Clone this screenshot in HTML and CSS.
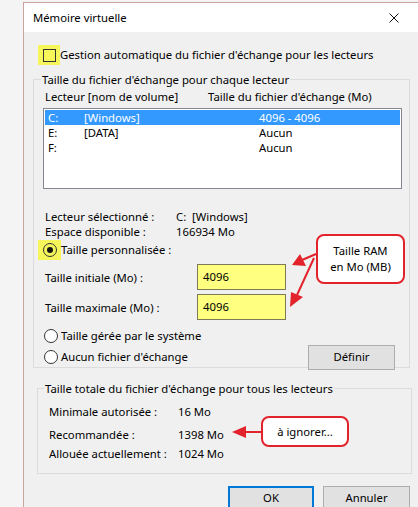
FILE: index.html
```html
<!DOCTYPE html>
<html lang="fr">
<head>
<meta charset="utf-8">
<title>Mémoire virtuelle</title>
<link rel="stylesheet" href="styles.css">
</head>
<body>
<div class="window">
  <div class="titlebar">
    <span class="title">Mémoire virtuelle</span>
    <svg class="close" width="10" height="10" viewBox="0 0 10 10"><path d="M0.5 0.5 L9.5 9.5 M9.5 0.5 L0.5 9.5" stroke="#111" stroke-width="1" fill="none"/></svg>
  </div>
  <div class="content">
    <div class="auto-row">
      <span class="hl hl-check"><span class="checkbox"></span></span>
      <span>Gestion automatique du fichier d'échange pour les lecteurs</span>
    </div>

    <fieldset class="group group1">
      <legend>Taille du fichier d'échange pour chaque lecteur</legend>
      <div class="cols">
        <span class="col-a">Lecteur [nom de volume]</span>
        <span>Taille du fichier d'échange (Mo)</span>
      </div>
      <div class="listbox">
        <div class="lrow sel"><span class="c1">C:</span><span class="c2">[Windows]</span><span>4096 - 4096</span></div>
        <div class="lrow"><span class="c1">E:</span><span class="c2">[DATA]</span><span>Aucun</span></div>
        <div class="lrow"><span class="c1">F:</span><span class="c2"></span><span>Aucun</span></div>
      </div>
      <div class="info info-first"><span class="lab">Lecteur sélectionné :</span><span>C:&nbsp; [Windows]</span></div>
      <div class="info"><span class="lab">Espace disponible :</span><span>166934 Mo</span></div>
      <div class="radio-row custom">
        <span class="hl hl-radio"><span class="radio on"></span></span>
        <span>Taille personnalisée :</span>
      </div>
      <div class="field-row first-field"><span class="flab">Taille initiale (Mo) :</span><span class="input">4096</span></div>
      <div class="field-row"><span class="flab">Taille maximale (Mo) :</span><span class="input">4096</span></div>
      <div class="radio-row sys"><span class="radio"></span><span>Taille gérée par le système</span></div>
      <div class="radio-row none">
        <span class="radio"></span><span class="grow">Aucun fichier d'échange</span>
        <span class="btn btn-def">Définir</span>
      </div>
    </fieldset>

    <fieldset class="group group2">
      <legend>Taille totale du fichier d'échange pour tous les lecteurs</legend>
      <div class="tot r1"><span class="tlab">Minimale autorisée :</span><span>16 Mo</span></div>
      <div class="tot r2"><span class="tlab">Recommandée :</span><span>1398 Mo</span></div>
      <div class="tot r3"><span class="tlab">Allouée actuellement :</span><span>1024 Mo</span></div>
    </fieldset>

    <div class="buttons">
      <span class="btn btn-ok">OK</span>
      <span class="btn btn-cancel">Annuler</span>
    </div>
  </div>
</div>

<div class="callout callout-ram">Taille RAM<br>en Mo (MB)</div>
<div class="callout callout-ign">à ignorer...</div>
<svg class="arrows" width="418" height="507" viewBox="0 0 418 507">
  <g stroke="#e3232b" stroke-width="2" fill="#e3232b">
    <line x1="316" y1="254" x2="302" y2="260"/>
    <polygon points="292,265 300,254 306,266" stroke="none"/>
    <line x1="314" y1="258" x2="297" y2="295"/>
    <polygon points="290,307 291,292 303,297" stroke="none"/>
    <line x1="261" y1="432" x2="244" y2="432"/>
    <polygon points="232,432 246,426 246,438" stroke="none"/>
  </g>
</svg>
</body>
</html>
```
FILE: styles.css
```css
html, body {
  margin: 0;
  padding: 0;
}
body {
  width: 418px;
  height: 507px;
  overflow: hidden;
  background: #f4f4f4;
  font-family: "Noto Sans", "DejaVu Sans", sans-serif;
  font-size: 11.3px;
  color: #000;
  position: relative;
}
.window {
  margin: 2px 0 0 23px;
  width: 395px;
  height: 505px;
  overflow: hidden;
  border-left: 1px solid #c9a39c;
  border-top: 1px solid #c9a39c;
  background: #f0f0f0;
}
.titlebar {
  height: 29px;
  background: #fff;
  display: flex;
  align-items: center;
  padding-left: 9px;
  position: relative;
}
.title {
  line-height: 16px;
}
.close {
  position: absolute;
  left: 365px;
  top: 10px;
}
.content {
  padding: 13px 0 0 9px;
}
.auto-row {
  display: flex;
  align-items: center;
  height: 20px;
  line-height: 16px;
}
.hl {
  background: #f6f55a;
  display: flex;
  align-items: center;
  justify-content: center;
}
.hl-check {
  width: 22px;
  height: 20px;
  margin-left: 5px;
}
.checkbox {
  width: 11px;
  height: 11px;
  border: 1px solid #333;
}
.group {
  margin: 0;
  padding: 0;
  border: 1px solid #dcdcdc;
  min-width: 0;
}
.group legend {
  padding: 0 1px;
  margin-left: 7px;
  line-height: 15px;
}
.group1 {
  width: 377px;
  margin-top: 7px;
  height: 296px;
  box-sizing: border-box;
}
.cols {
  display: flex;
  line-height: 15px;
  margin: 2px 0 0 11px;
}
.col-a {
  width: 163px;
}
.listbox {
  margin: 4px 0 0 9px;
  width: 355px;
  height: 77px;
  border: 1px solid #828790;
  background: #fff;
  padding: 1px;
}
.lrow {
  display: flex;
  height: 15px;
  line-height: 15px;
  padding-left: 3px;
}
.lrow.sel {
  background: #3399ff;
  color: #fff;
}
.lrow .c1 { width: 36px; }
.lrow .c2 { width: 175px; }
.info {
  display: flex;
  line-height: 15px;
  margin-left: 11px;
}
.info-first { margin-top: 20px; }
.info .lab { width: 131px; }
.radio-row {
  display: flex;
  align-items: center;
  line-height: 16px;
}
.custom {
  height: 20px;
  margin-top: 1px;
}
.hl-radio {
  width: 23px;
  height: 20px;
  margin-left: 4px;
}
.radio {
  width: 12px;
  height: 12px;
  border: 1px solid #333;
  border-radius: 50%;
  background: #fff;
  display: flex;
  align-items: center;
  justify-content: center;
}
.hl-radio .radio { background: transparent; }
.radio.on::after {
  content: "";
  width: 6px;
  height: 6px;
  border-radius: 50%;
  background: #111;
}
.field-row {
  display: flex;
  align-items: center;
  height: 26px;
  margin-left: 11px;
}
.first-field { margin-top: 4px; }
.field-row + .field-row { margin-top: 4px; }
.flab { width: 152px; }
.input {
  width: 82px;
  height: 24px;
  border: 1px solid #7d7a56;
  background: #ffff80;
  padding-left: 5px;
  line-height: 24px;
}
.sys {
  margin-top: 8px;
  height: 16px;
}
.sys .radio, .none .radio {
  margin: 0 3px 0 10px;
}
.none {
  margin-top: 1px;
  height: 24px;
}
.grow { flex: 1; }
.btn {
  display: flex;
  align-items: center;
  justify-content: center;
  background: #e1e1e1;
  border: 1px solid #adadad;
  box-sizing: border-box;
}
.btn-def {
  width: 87px;
  height: 25px;
  margin-right: 14px;
}
.group2 {
  width: 375px;
  margin: 13px 0 0 4px;
  height: 93px;
  box-sizing: border-box;
}
.group2 legend { margin-left: 6px; }
.tot {
  display: flex;
  line-height: 16px;
  margin-left: 11px;
}
.tot .tlab { width: 129px; }
.r1 { margin-top: 8px; }
.r2 { margin-top: 7px; }
.r3 { margin-top: 3px; }
.buttons {
  display: flex;
  margin: 12px 0 0 195px;
  gap: 9px;
}
.btn-ok {
  width: 86px;
  height: 23px;
  border: 2px solid #0078d7;
}
.btn-cancel {
  width: 87px;
  height: 23px;
}
.callout {
  position: absolute;
  background: #fff;
  border: 2px solid #e3232b;
  border-radius: 8px;
  box-sizing: border-box;
  display: flex;
  align-items: center;
  justify-content: center;
  text-align: center;
  line-height: 16px;
}
.callout-ram {
  left: 316px;
  top: 234px;
  width: 89px;
  height: 50px;
}
.callout-ign {
  left: 261px;
  top: 416px;
  width: 88px;
  height: 31px;
}
.arrows {
  position: absolute;
  left: 0;
  top: 0;
  pointer-events: none;
}
```
